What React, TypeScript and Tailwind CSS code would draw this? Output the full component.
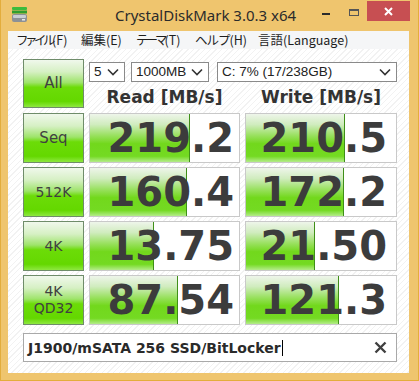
import React from "react";

const rows = [
  { label: ["Seq"], read: "219.2", write: "210.5", rf: 100, wf: 99, hand: true },
  { label: ["512K"], read: "160.4", write: "172.2", rf: 97, wf: 98 },
  { label: ["4K"], read: "13.75", write: "21.50", rf: 64, wf: 69 },
  { label: ["4K", "QD32"], read: "87.54", write: "121.3", rf: 88, wf: 93 },
];

const menu = [
  { kana: "ファイル", rest: "(F)", w: "w-[65px]", k: "tracking-[-3.5px]" },
  { kana: "編集", rest: "(E)", w: "w-[55px]", k: "" },
  { kana: "テーマ", rest: "(T)", w: "w-[59px]", k: "tracking-[-3px]" },
  { kana: "ヘルプ", rest: "(H)", w: "w-[63px]", k: "tracking-[-1px]" },
  { kana: "言語", rest: "(Language)", w: "", k: "" },
];

function Chevron() {
  return (
    <svg width="12" height="8" viewBox="0 0 12 8" className="shrink-0">
      <polyline points="1,1.5 6,6.5 11,1.5" fill="none" stroke="#333" strokeWidth="1.6" />
    </svg>
  );
}

function Select({ text, className }: { text: string; className: string }) {
  return (
    <div className={`flex h-[20px] items-center justify-between border border-[#8a8a8a] bg-white pl-[4px] pr-[5px] font-['Liberation_Sans',sans-serif] text-[13.5px] text-[#222] ${className}`}>
      <span className="leading-none">{text}</span>
      <Chevron />
    </div>
  );
}

function GreenButton({ lines, hand }: { lines: string[]; hand?: boolean }) {
  return (
    <div className="flex h-full w-[61px] shrink-0 flex-col items-center justify-center border border-[#6f8c6a] bg-[linear-gradient(to_bottom,#f0f8ec_0%,#d6f0c4_25%,#9ee46a_48%,#6cdc08_58%,#64d800_88%,#8ee840_100%)] text-[#404040]">
      {lines.map((l) => (
        <span key={l} className={`leading-[17px] ${hand ? "text-[15px]" : "text-[14px]"}`}>
          {l}
        </span>
      ))}
    </div>
  );
}

function Bar({ value, fill, pr }: { value: string; fill: number; pr: string }) {
  return (
    <div className={`relative flex h-full items-center justify-end border border-[#c9c9c9] bg-white ${pr}`}>
      <div
        className="absolute inset-y-0 left-0 border-r border-[#3f8f18] bg-[linear-gradient(to_bottom,#eef5ea_0%,#d0ecbe_22%,#96e05a_46%,#72d81c_62%,#74da22_88%,#b4ec8a_100%)]"
        style={{ width: fill }}
      />
      <span className="relative font-['DejaVu_Sans',sans-serif] text-[40px] font-bold leading-none text-[#3c3c3c]">
        {value}
      </span>
    </div>
  );
}

export default function App() {
  return (
    <div className="flex h-[381px] w-[419px] flex-col border-x border-b border-[#e3ad3c] bg-[#efc56e] font-['DejaVu_Sans',sans-serif]">
      {/* Title bar */}
      <div className="relative flex h-[31px] items-start">
        <svg width="17" height="17" viewBox="0 0 17 17" className="ml-[10px] mt-[6px]">
          <rect x="1" y="1" width="15" height="3" rx="1" fill="#3dbb3d" />
          <rect x="1" y="4.5" width="15" height="3" fill="#2f9e2f" />
          <rect x="1" y="8" width="15" height="8" rx="2" fill="#8c9196" />
          <rect x="2" y="9" width="13" height="3" rx="1" fill="#c9ced2" />
          <rect x="11" y="13" width="3" height="1.5" fill="#e8eaec" />
        </svg>
        <div className="absolute left-[114px] top-[5px] font-['Noto_Sans',sans-serif] text-[15px] leading-[20px] text-[#2b2b2b]">
          CrystalDiskMark 3.0.3 x64
        </div>
        <div className="absolute left-[321px] top-[13px] h-[2px] w-[8px] bg-[#2b2b2b]" />
        <div className="absolute left-[348px] top-[9px] h-[7px] w-[10px] border border-t-2 border-[#555]" />
        <div className="absolute left-[366px] top-[1px] flex h-[20px] w-[43px] items-center justify-center bg-[#c74f52]">
          <svg width="9" height="9" viewBox="0 0 9 9">
            <path d="M1 1L8 8M8 1L1 8" stroke="#fff" strokeWidth="2" />
          </svg>
        </div>
      </div>

      {/* Client */}
      <div className="ml-[7px] mr-[9px] flex h-[342px] flex-col bg-white">
        <div className="flex h-[18px] items-center bg-[#f5f6f7] pl-[8px] font-['Noto_Sans_CJK_JP',sans-serif] text-[12.5px] text-[#1e1e1e]">
          {menu.map((m) => (
            <span key={m.kana} className={`shrink-0 whitespace-nowrap leading-none ${m.w}`}>
              <span className={m.k}>{m.kana}</span>
              {m.rest}
            </span>
          ))}
        </div>

        <div className="flex flex-1 flex-col bg-[repeating-linear-gradient(135deg,#ffffff_0px,#ffffff_3px,#f2f2f2_3px,#f2f2f2_4px)] pl-[15px] pt-[10px]">
          {/* Top: All + selects + headers */}
          <div className="flex h-[54px] gap-[5px]">
            <div className="h-[49px]">
              <GreenButton lines={["All"]} hand />
            </div>
            <div className="flex w-[308px] flex-col">
              <div className="mt-[3px] flex">
                <Select text="5" className="w-[36px]" />
                <Select text="1000MB" className="ml-[6px] w-[78px]" />
                <Select text="C: 7% (17/238GB)" className="ml-[8px] w-[180px]" />
              </div>
              <div className="grid h-[31px] grid-cols-[151px_152px] gap-[5px] text-[17px] font-bold text-[#333]">
                <div className="flex items-center justify-center">Read [MB/s]</div>
                <div className="flex items-center justify-center">Write [MB/s]</div>
              </div>
            </div>
          </div>

          {/* Result rows */}
          <div className="flex flex-col gap-[4px]">
            {rows.map((r) => (
              <div key={r.read} className="flex h-[50px] gap-[5px]">
                <GreenButton lines={r.label} hand={r.hand} />
                <div className="w-[151px]">
                  <Bar value={r.read} fill={r.rf} pr="pr-[5px]" />
                </div>
                <div className="w-[152px]">
                  <Bar value={r.write} fill={r.wf} pr="pr-[9px]" />
                </div>
              </div>
            ))}
          </div>

          {/* Comment */}
          <div className="mt-[8px] flex h-[29px] w-[374px] items-center border border-[#a9a9a9] bg-white pl-[4px] pr-[9px]">
            <span className="text-[14px] font-bold leading-none text-[#2a2a2a]">J1900/mSATA 256 SSD/BitLocker</span>
            <span className="ml-px h-[16px] w-px bg-black" />
            <span className="flex-1" />
            <svg width="13" height="13" viewBox="0 0 13 13">
              <path d="M1.5 1.5L11.5 11.5M11.5 1.5L1.5 11.5" stroke="#404040" strokeWidth="2.4" />
            </svg>
          </div>
        </div>
      </div>
    </div>
  );
}
